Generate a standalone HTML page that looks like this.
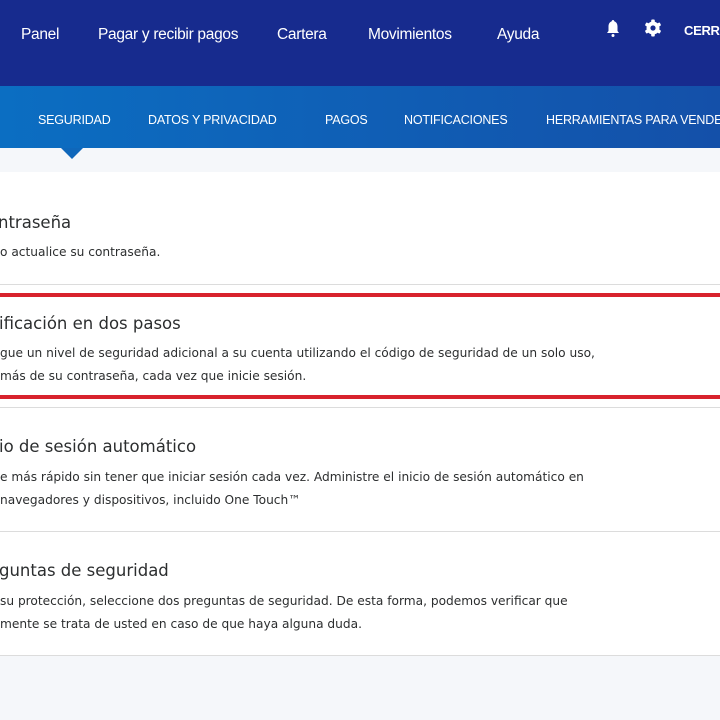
<!DOCTYPE html>
<html><head><meta charset="utf-8"><style>
*{margin:0;padding:0;box-sizing:border-box}
html,body{overflow:hidden}
body{width:720px;height:720px;background:#f5f7fa;font-family:"Liberation Sans",sans-serif;position:relative}
.top{position:absolute;left:0;top:0;width:720px;height:86px;background:#172b8e;overflow:hidden}
.top span{position:absolute;top:26px;color:#fff;font-size:15.5px;letter-spacing:-0.3px;white-space:nowrap}
.sub{position:absolute;left:0;top:86px;width:720px;height:62px;background:linear-gradient(90deg,#0b6ec2,#1450a9);overflow:hidden}
.sub span{position:absolute;top:27px;color:#fff;font-size:12.5px;letter-spacing:-0.2px;white-space:nowrap}
.tri{position:absolute;left:61px;top:148px;width:0;height:0;border-left:11px solid transparent;border-right:11px solid transparent;border-top:11px solid #0f67ba}
.content{position:absolute;left:0;top:172px;width:720px;height:484px;background:#fff}
.sep{position:absolute;left:0;width:720px;height:1px;background:#dcdcdc}
.red{position:absolute;left:0;width:720px;height:4px;background:#d8222d}
.t{position:absolute;left:0;font-family:"DejaVu Sans",sans-serif;color:#2c2e2f;font-size:16.5px;white-space:nowrap}
.b{position:absolute;left:0;font-family:"DejaVu Sans",sans-serif;color:#2c2e2f;font-size:12.2px;line-height:23px;white-space:nowrap}
</style></head><body>
<div class="top">
<span style="left:21px">Panel</span>
<span style="left:98px">Pagar y recibir pagos</span>
<span style="left:277px">Cartera</span>
<span style="left:368px">Movimientos</span>
<span style="left:497px">Ayuda</span>
<svg style="position:absolute;left:604px;top:19px" width="18" height="19" viewBox="0 0 18 19"><path d="M9 1c-.8 0-1.2.6-1.2 1.2C5.5 3 4.5 5 4.5 7.5V12L3 14h12l-1.5-2V7.5C13.5 5 12.5 3 10.2 2.2 10.2 1.6 9.8 1 9 1z" fill="#fff"/><circle cx="9" cy="16.5" r="1.5" fill="#fff"/></svg>
<svg style="position:absolute;left:644px;top:19px" width="18" height="18" viewBox="0 0 18 18"><g fill="#fff"><circle cx="9" cy="9" r="6.5"/><rect x="7.2" y="0.5" width="3.6" height="17" rx="1"/><rect x="7.2" y="0.5" width="3.6" height="17" rx="1" transform="rotate(60 9 9)"/><rect x="7.2" y="0.5" width="3.6" height="17" rx="1" transform="rotate(120 9 9)"/></g><circle cx="9" cy="9" r="2.6" fill="#172b8e"/></svg>
<span style="left:684px;font-size:13px;font-weight:bold;top:23px">CERRAR</span>
</div>
<div class="sub">
<span style="left:38px">SEGURIDAD</span>
<span style="left:148px">DATOS Y PRIVACIDAD</span>
<span style="left:325px">PAGOS</span>
<span style="left:404px">NOTIFICACIONES</span>
<span style="left:546px">HERRAMIENTAS PARA VENDEDORES</span>
</div>
<div class="tri"></div>
<div class="content"></div>
<div class="t" style="top:213px;left:-2px">ntraseña</div>
<div class="b" style="top:241px">o actualice su contraseña.</div>
<div class="sep" style="top:284px"></div>
<div class="red" style="top:293px"></div>
<div class="t" style="top:314px;left:-1px">ificación en dos pasos</div>
<div class="b" style="top:342px">gue un nivel de seguridad adicional a su cuenta utilizando el código de seguridad de un solo uso,<br>más de su contraseña, cada vez que inicie sesión.</div>
<div class="red" style="top:395px"></div>
<div class="sep" style="top:407px"></div>
<div class="t" style="top:437px;left:-1px">io de sesión automático</div>
<div class="b" style="top:466px">e más rápido sin tener que iniciar sesión cada vez. Administre el inicio de sesión automático en<br>navegadores y dispositivos, incluido One Touch™</div>
<div class="sep" style="top:531px"></div>
<div class="t" style="top:561px;left:-1px">guntas de seguridad</div>
<div class="b" style="top:590px">su protección, seleccione dos preguntas de seguridad. De esta forma, podemos verificar que<br>mente se trata de usted en caso de que haya alguna duda.</div>
<div class="sep" style="top:655px"></div>
</body></html>
